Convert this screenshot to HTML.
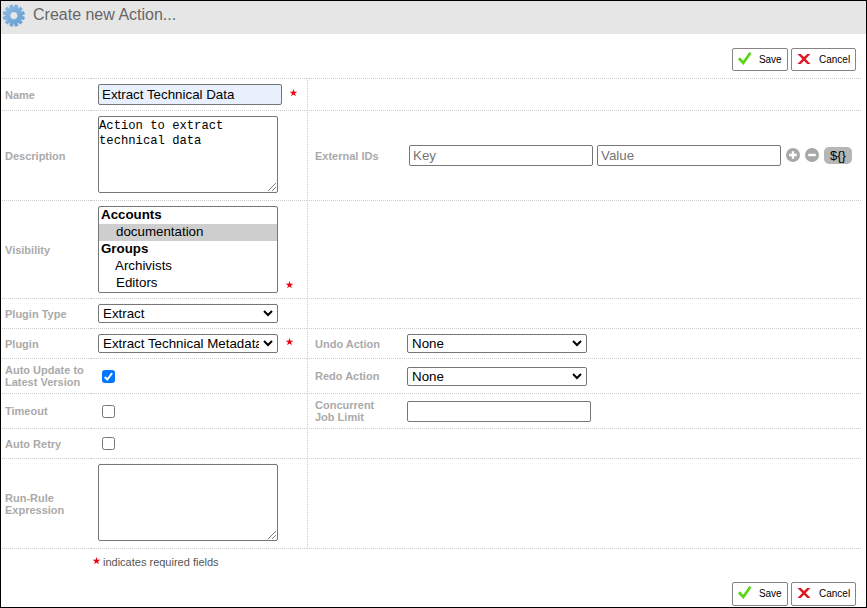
<!DOCTYPE html>
<html lang="en">
<head>
<meta charset="utf-8">
<title>Create new Action...</title>
<style>
html,body{margin:0;padding:0;background:#fff;}
body{width:867px;height:608px;overflow:hidden;position:relative;font-family:"Liberation Sans",Arial,sans-serif;}
#frame{position:absolute;left:0;top:0;width:865px;height:606px;border:1px solid #000;background:#fff;overflow:hidden;}
#frame *{box-sizing:border-box;}
.abs{position:absolute;}
#hdr{position:absolute;left:0;top:0;width:865px;height:33px;background:#e6e6e6;}
#title{position:absolute;left:32px;top:4px;font-size:16px;line-height:20px;color:#666;white-space:nowrap;}
.hd{position:absolute;height:1px;background:repeating-linear-gradient(to right,#ccc 0,#ccc 1px,transparent 1px,transparent 2px);}
.hs{position:absolute;height:1px;background:#ccc;}
.vd{position:absolute;left:306px;width:1px;background:repeating-linear-gradient(to bottom,#ccc 0,#ccc 1px,transparent 1px,transparent 2px);}
.lbl{position:absolute;font-size:11px;font-weight:bold;color:#aaa;line-height:12px;white-space:nowrap;}
.inp{position:absolute;border:1px solid #767676;border-radius:2px;background:#fff;font-size:13.33px;color:#000;white-space:nowrap;overflow:hidden;}
.inp span{position:absolute;left:3px;top:0;line-height:19px;}
.ph span{color:#757575;}
.ta{position:absolute;border:1px solid #767676;border-radius:2px;background:#fff;font-family:"Liberation Mono",monospace;font-size:12.2px;line-height:15px;color:#000;}
.ta span{position:absolute;left:0px;top:2px;white-space:pre;}
.sel{position:absolute;border:1px solid #767676;border-radius:2px;background:#fff;font-size:13.33px;color:#000;white-space:nowrap;overflow:hidden;}
.sel span{position:absolute;left:4px;top:0;line-height:17px;}
.star{position:absolute;color:#e8112d;font-size:10px;line-height:10px;}
.cb{position:absolute;width:13px;height:13px;border:1px solid #767676;border-radius:2.5px;background:#fff;}
.cb.on{background:#0075ff;border-color:#0075ff;}
.btn{position:absolute;height:23px;border:1px solid #858585;border-radius:2px;background:#fff;font-size:10px;color:#000;}
.btn span{position:absolute;top:0;line-height:21px;}
.lst{position:absolute;border:1px solid #767676;border-radius:2px;background:#fff;font-size:13.33px;color:#000;overflow:hidden;}
.lst div{height:17px;line-height:16px;white-space:nowrap;padding-left:2px;}
.lst .o{padding-left:17px;}
.lst .g{font-weight:bold;}
.lst .s{background:#cecece;}
</style>
</head>
<body>
<div id="frame">
  <div id="hdr"></div>
  <svg class="abs" style="left:0px;top:2px" width="26" height="26" viewBox="-12.85 -12.6 26 26">
    <defs><linearGradient id="gg" x1="0" y1="0" x2="1" y2="1"><stop offset="0" stop-color="#93bde4"/><stop offset="1" stop-color="#5f9bd0"/></linearGradient></defs>
    <path fill="url(#gg)" fill-rule="evenodd" stroke="#6fa6d8" stroke-width="0.5" stroke-linejoin="round" d="M0.51,-8.28 L1.33,-10.82 L4.26,-10.03 L3.70,-7.43 L4.58,-6.92 L6.56,-8.71 L8.71,-6.56 L6.92,-4.58 L7.43,-3.70 L10.03,-4.26 L10.82,-1.33 L8.28,-0.51 L8.28,0.51 L10.82,1.33 L10.03,4.26 L7.43,3.70 L6.92,4.58 L8.71,6.56 L6.56,8.71 L4.58,6.92 L3.70,7.43 L4.26,10.03 L1.33,10.82 L0.51,8.28 L-0.51,8.28 L-1.33,10.82 L-4.26,10.03 L-3.70,7.43 L-4.58,6.92 L-6.56,8.71 L-8.71,6.56 L-6.92,4.58 L-7.43,3.70 L-10.03,4.26 L-10.82,1.33 L-8.28,0.51 L-8.28,-0.51 L-10.82,-1.33 L-10.03,-4.26 L-7.43,-3.70 L-6.92,-4.58 L-8.71,-6.56 L-6.56,-8.71 L-4.58,-6.92 L-3.70,-7.43 L-4.26,-10.03 L-1.33,-10.82 L-0.51,-8.28 Z M0,-3.9 A3.9,3.9 0 1 0 0.001,-3.9 Z"/>
  </svg>
  <div id="title">Create new Action...</div>

  <!-- top buttons -->
  <div class="btn" style="left:731px;top:47px;width:56px;">
    <svg class="abs" style="left:-1px;top:-1px" width="24" height="23" viewBox="0 0 24 23"><path d="M6.9,10.3 L11.3,14.9 L18.4,4.7" stroke="#59d512" stroke-width="2.7" fill="none"/></svg>
    <span style="left:26px;letter-spacing:-0.1px">Save</span>
  </div>
  <div class="btn" style="left:790px;top:47px;width:65px;">
    <svg class="abs" style="left:-1px;top:-1px" width="24" height="23" viewBox="0 0 24 23"><path d="M6.5,6 H9.8 L13,8.9 L16.2,6 H19.4 L14.7,10.9 L19.6,16 H16.2 L13,12.8 L9.8,16 H6.4 L11.3,10.9 Z" fill="#e01a22"/></svg>
    <span style="left:27px">Cancel</span>
  </div>

  <!-- lines -->
  <div class="hd" style="left:1px;width:89px;top:77px"></div><div class="hs" style="left:90px;width:2px;top:77px"></div><div class="hd" style="left:93px;width:213px;top:77px"></div><div class="hd" style="left:308px;width:91px;top:77px"></div><div class="hs" style="left:399px;width:1px;top:77px"></div><div class="hd" style="left:401px;width:459px;top:77px"></div>
  <div class="hd" style="left:1px;width:89px;top:109px"></div><div class="hs" style="left:90px;width:2px;top:109px"></div><div class="hd" style="left:93px;width:213px;top:109px"></div><div class="hd" style="left:308px;width:91px;top:109px"></div><div class="hs" style="left:399px;width:1px;top:109px"></div><div class="hd" style="left:401px;width:459px;top:109px"></div>
  <div class="hd" style="left:1px;width:89px;top:199px"></div><div class="hs" style="left:90px;width:2px;top:199px"></div><div class="hd" style="left:93px;width:213px;top:199px"></div><div class="hd" style="left:308px;width:91px;top:199px"></div><div class="hs" style="left:399px;width:1px;top:199px"></div><div class="hd" style="left:401px;width:459px;top:199px"></div>
  <div class="hd" style="left:1px;width:89px;top:297px"></div><div class="hs" style="left:90px;width:2px;top:297px"></div><div class="hd" style="left:93px;width:213px;top:297px"></div><div class="hd" style="left:308px;width:91px;top:297px"></div><div class="hs" style="left:399px;width:1px;top:297px"></div><div class="hd" style="left:401px;width:459px;top:297px"></div>
  <div class="hd" style="left:1px;width:89px;top:327px"></div><div class="hs" style="left:90px;width:2px;top:327px"></div><div class="hd" style="left:93px;width:213px;top:327px"></div><div class="hd" style="left:308px;width:91px;top:327px"></div><div class="hs" style="left:399px;width:1px;top:327px"></div><div class="hd" style="left:401px;width:459px;top:327px"></div>
  <div class="hd" style="left:1px;width:89px;top:357px"></div><div class="hs" style="left:90px;width:2px;top:357px"></div><div class="hd" style="left:93px;width:213px;top:357px"></div><div class="hd" style="left:308px;width:91px;top:357px"></div><div class="hs" style="left:399px;width:1px;top:357px"></div><div class="hd" style="left:401px;width:459px;top:357px"></div>
  <div class="hd" style="left:1px;width:89px;top:392px"></div><div class="hs" style="left:90px;width:2px;top:392px"></div><div class="hd" style="left:93px;width:213px;top:392px"></div><div class="hd" style="left:308px;width:91px;top:392px"></div><div class="hs" style="left:399px;width:1px;top:392px"></div><div class="hd" style="left:401px;width:459px;top:392px"></div>
  <div class="hd" style="left:1px;width:89px;top:427px"></div><div class="hs" style="left:90px;width:2px;top:427px"></div><div class="hd" style="left:93px;width:213px;top:427px"></div><div class="hd" style="left:308px;width:91px;top:427px"></div><div class="hs" style="left:399px;width:1px;top:427px"></div><div class="hd" style="left:401px;width:459px;top:427px"></div>
  <div class="hd" style="left:1px;width:89px;top:457px"></div><div class="hs" style="left:90px;width:2px;top:457px"></div><div class="hd" style="left:93px;width:213px;top:457px"></div><div class="hd" style="left:308px;width:91px;top:457px"></div><div class="hs" style="left:399px;width:1px;top:457px"></div><div class="hd" style="left:401px;width:459px;top:457px"></div>
  <div class="hd" style="left:1px;width:89px;top:547px"></div><div class="hs" style="left:90px;width:2px;top:547px"></div><div class="hd" style="left:93px;width:213px;top:547px"></div><div class="hd" style="left:308px;width:91px;top:547px"></div><div class="hs" style="left:399px;width:1px;top:547px"></div><div class="hd" style="left:401px;width:459px;top:547px"></div>
  <div class="vd" style="top:77px;height:281px"></div><div class="vd" style="top:358px;height:33px"></div><div class="vd" style="top:392px;height:1px"></div><div class="vd" style="top:393px;height:155px"></div>

  <!-- left labels -->
  <div class="lbl" style="left:4px;top:88px">Name</div>
  <div class="lbl" style="left:4px;top:149px">Description</div>
  <div class="lbl" style="left:4px;top:243px">Visibility</div>
  <div class="lbl" style="left:4px;top:307px">Plugin Type</div>
  <div class="lbl" style="left:4px;top:337px">Plugin</div>
  <div class="lbl" style="left:4px;top:363px">Auto Update to<br>Latest Version</div>
  <div class="lbl" style="left:4px;top:404px">Timeout</div>
  <div class="lbl" style="left:4px;top:437px">Auto Retry</div>
  <div class="lbl" style="left:4px;top:491px">Run-Rule<br>Expression</div>

  <!-- right labels -->
  <div class="lbl" style="left:314px;top:149px">External IDs</div>
  <div class="lbl" style="left:314px;top:337px">Undo Action</div>
  <div class="lbl" style="left:314px;top:369px">Redo Action</div>
  <div class="lbl" style="left:314px;top:398px">Concurrent<br>Job Limit</div>

  <!-- Name -->
  <div class="inp" style="left:97px;top:83px;width:184px;height:21px;background:#e8f0fe;"><span>Extract Technical Data</span></div>

  <!-- Description -->
  <div class="ta" style="left:97px;top:115px;width:180px;height:77px;"><span>Action to extract
technical data</span>
    <svg class="abs" style="left:169px;top:66px" width="8" height="8" viewBox="0 0 8 8"><path d="M7.5,0.5 L0.5,7.5 M7.5,4.5 L4.5,7.5" stroke="#707070" stroke-width="0.95" stroke-linecap="square" fill="none"/></svg>
  </div>

  <!-- Visibility -->
  <div class="lst" style="left:97px;top:205px;width:180px;height:87px;">
    <div class="g">Accounts</div>
    <div class="o s">documentation</div>
    <div class="g">Groups</div>
    <div class="o" style="padding-left:16px">Archivists</div>
    <div class="o">Editors</div>
  </div>

  <!-- Plugin Type -->
  <div class="sel" style="left:97px;top:303px;width:180px;height:19px;"><span>Extract</span>
    <svg class="abs" style="right:4px;top:5px" width="10" height="7" viewBox="0 0 10 7"><path d="M1,1 L5,5 L9,1" stroke="#000" stroke-width="2" fill="none"/></svg>
  </div>
  <!-- Plugin -->
  <div class="sel" style="left:97px;top:333px;width:180px;height:19px;"><span style="width:156px;overflow:hidden;">Extract Technical Metadata</span>
    <svg class="abs" style="right:4px;top:5px" width="10" height="7" viewBox="0 0 10 7"><path d="M1,1 L5,5 L9,1" stroke="#000" stroke-width="2" fill="none"/></svg>
  </div>

  <!-- checkboxes -->
  <div class="cb on" style="left:101px;top:369px"><svg class="abs" style="left:-1px;top:-1px" width="13" height="13" viewBox="0 0 13 13"><path d="M2.7,7 L5.3,9.5 L10.1,3.2" stroke="#fff" stroke-width="2" fill="none"/></svg></div>
  <div class="cb" style="left:101px;top:404px"></div>
  <div class="cb" style="left:101px;top:436px"></div>

  <!-- Run rule -->
  <div class="ta" style="left:97px;top:463px;width:180px;height:77px;">
    <svg class="abs" style="left:169px;top:66px" width="8" height="8" viewBox="0 0 8 8"><path d="M7.5,0.5 L0.5,7.5 M7.5,4.5 L4.5,7.5" stroke="#707070" stroke-width="0.95" stroke-linecap="square" fill="none"/></svg>
  </div>

  <!-- External IDs -->
  <div class="inp ph" style="left:408px;top:144px;width:184px;height:21px;"><span>Key</span></div>
  <div class="inp ph" style="left:596px;top:144px;width:184px;height:21px;"><span>Value</span></div>
  <svg class="abs" style="left:785px;top:147px" width="14" height="14" viewBox="0 0 14 14"><circle cx="7" cy="7" r="7" fill="#a8a8a8"/><path d="M3.2,7 H10.8 M7,3.2 V10.8" stroke="#fff" stroke-width="2.4"/></svg>
  <svg class="abs" style="left:804px;top:147px" width="14" height="14" viewBox="0 0 14 14"><circle cx="7" cy="7" r="7" fill="#a8a8a8"/><path d="M3.2,7 H10.8" stroke="#fff" stroke-width="2.4"/></svg>
  <div class="abs" style="left:823px;top:146px;width:28px;height:17px;border-radius:5px;background:#b6b6b6;font-size:13px;line-height:17px;text-align:center;color:#000;">${}</div>

  <!-- Undo / Redo / Concurrent -->
  <div class="sel" style="left:406px;top:333px;width:180px;height:19px;"><span>None</span>
    <svg class="abs" style="right:4px;top:5px" width="10" height="7" viewBox="0 0 10 7"><path d="M1,1 L5,5 L9,1" stroke="#000" stroke-width="2" fill="none"/></svg>
  </div>
  <div class="sel" style="left:406px;top:366px;width:180px;height:19px;"><span>None</span>
    <svg class="abs" style="right:4px;top:5px" width="10" height="7" viewBox="0 0 10 7"><path d="M1,1 L5,5 L9,1" stroke="#000" stroke-width="2" fill="none"/></svg>
  </div>
  <div class="inp" style="left:406px;top:400px;width:184px;height:21px;"></div>

  <svg class="abs" style="left:0;top:0;pointer-events:none" width="865" height="606" viewBox="0 0 865 606"><g fill="#ee0010"><polygon points="292.45,88.00 293.39,90.71 296.25,90.76 293.97,92.49 294.80,95.24 292.45,93.60 290.10,95.24 290.93,92.49 288.65,90.76 291.51,90.71"/><polygon points="288.50,280.00 289.44,282.71 292.30,282.76 290.02,284.49 290.85,287.24 288.50,285.60 286.15,287.24 286.98,284.49 284.70,282.76 287.56,282.71"/><polygon points="288.50,337.00 289.44,339.71 292.30,339.76 290.02,341.49 290.85,344.24 288.50,342.60 286.15,344.24 286.98,341.49 284.70,339.76 287.56,339.71"/><polygon points="95.50,556.00 96.44,558.71 99.30,558.76 97.02,560.49 97.85,563.24 95.50,561.60 93.15,563.24 93.98,560.49 91.70,558.76 94.56,558.71"/></g></svg>
  <!-- footer -->
  <div class="abs" style="left:102px;top:555px;font-size:11px;line-height:12px;color:#555;white-space:nowrap;">indicates required fields</div>

  <div class="btn" style="left:731px;top:581px;width:56px;height:24px;">
    <svg class="abs" style="left:-1px;top:-1px" width="24" height="23" viewBox="0 0 24 23"><path d="M6.9,10.3 L11.3,14.9 L18.4,4.7" stroke="#59d512" stroke-width="2.7" fill="none"/></svg>
    <span style="left:26px;letter-spacing:-0.1px">Save</span>
  </div>
  <div class="btn" style="left:790px;top:581px;width:65px;height:24px;">
    <svg class="abs" style="left:-1px;top:-1px" width="24" height="23" viewBox="0 0 24 23"><path d="M6.5,6 H9.8 L13,8.9 L16.2,6 H19.4 L14.7,10.9 L19.6,16 H16.2 L13,12.8 L9.8,16 H6.4 L11.3,10.9 Z" fill="#e01a22"/></svg>
    <span style="left:27px">Cancel</span>
  </div>
</div>
</body>
</html>
